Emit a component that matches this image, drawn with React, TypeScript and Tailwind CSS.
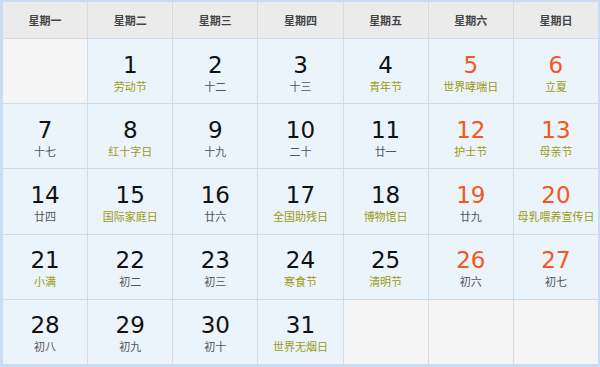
const weekDays = ["星期一", "星期二", "星期三", "星期四", "星期五", "星期六", "星期日"]

type Day = { n: number; sub: string; fest?: boolean } | null

const days: Day[] = [
  null,
  { n: 1, sub: "劳动节", fest: true },
  { n: 2, sub: "十二" },
  { n: 3, sub: "十三" },
  { n: 4, sub: "青年节", fest: true },
  { n: 5, sub: "世界哮喘日", fest: true },
  { n: 6, sub: "立夏", fest: true },
  { n: 7, sub: "十七" },
  { n: 8, sub: "红十字日", fest: true },
  { n: 9, sub: "十九" },
  { n: 10, sub: "二十" },
  { n: 11, sub: "廿一" },
  { n: 12, sub: "护士节", fest: true },
  { n: 13, sub: "母亲节", fest: true },
  { n: 14, sub: "廿四" },
  { n: 15, sub: "国际家庭日", fest: true },
  { n: 16, sub: "廿六" },
  { n: 17, sub: "全国助残日", fest: true },
  { n: 18, sub: "博物馆日", fest: true },
  { n: 19, sub: "廿九" },
  { n: 20, sub: "母乳喂养宣传日", fest: true },
  { n: 21, sub: "小满", fest: true },
  { n: 22, sub: "初二" },
  { n: 23, sub: "初三" },
  { n: 24, sub: "寒食节", fest: true },
  { n: 25, sub: "清明节", fest: true },
  { n: 26, sub: "初六" },
  { n: 27, sub: "初七" },
  { n: 28, sub: "初八" },
  { n: 29, sub: "初九" },
  { n: 30, sub: "初十" },
  { n: 31, sub: "世界无烟日", fest: true },
  null,
  null,
  null,
]

const numFont = { fontFamily: '"DejaVu Sans", Verdana, sans-serif' }

export default function App() {
  return (
    <div
      className="w-[600px] h-[367px] bg-[#c9dcf3] pl-[3px] pt-[2px] pr-[2px] pb-[3px]"
      style={{ fontFamily: '"Noto Sans CJK SC", sans-serif' }}
    >
      <div className="grid grid-cols-7 grid-rows-[36px_repeat(5,1fr)] gap-px bg-[#d0dcea] h-full">
        {weekDays.map((w) => (
          <div
            key={w}
            className="bg-[#ebebeb] flex items-center justify-center text-[11px] font-bold text-[#444]"
          >
            {w}
          </div>
        ))}
        {days.map((d, i) => {
          if (!d) return <div key={"e" + i} className="bg-[#f5f5f5]" />
          const weekend = i % 7 >= 5
          return (
            <div
              key={i}
              className="bg-[#ebf3fb] flex flex-col items-center justify-center pt-[3px]"
            >
              <div
                className={
                  "text-[23px] leading-[26px] " +
                  (weekend ? "text-[#f4581c]" : "text-[#111]")
                }
                style={numFont}
              >
                {d.n}
              </div>
              <div
                className={
                  "text-[11px] leading-[16px] " +
                  (d.fest ? "text-[#9c9c12]" : "text-[#555]")
                }
              >
                {d.sub}
              </div>
            </div>
          )
        })}
      </div>
    </div>
  )
}
